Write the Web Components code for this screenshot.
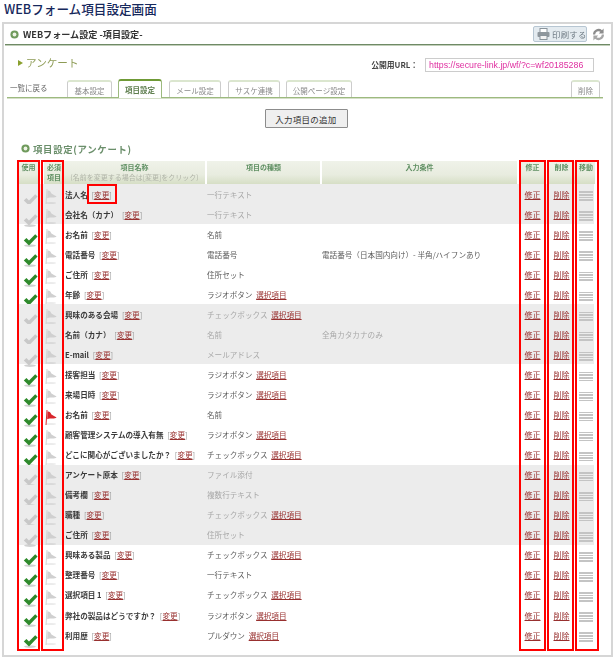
<!DOCTYPE html>
<html lang="ja">
<head>
<meta charset="utf-8">
<title>WEBフォーム項目設定画面</title>
<style>
html, body { margin: 0; padding: 0; background: #fff; }
body { width: 615px; height: 659px; overflow: hidden; font-family: "Noto Sans CJK JP", "Noto Sans", sans-serif; }
</style>
</head>
<body>
<form-page>
  <span slot="title">WEBフォーム項目設定画面</span>
  <panel-head>WEBフォーム設定 -項目設定-</panel-head>
  <form-info url="https://secure-link.jp/wf/?c=wf20185286">アンケート</form-info>
  <tab-bar>
    <tab-item style="width:45px;margin-left:16px">基本設定</tab-item>
    <tab-item active style="width:44px;margin-left:6px">項目設定</tab-item>
    <tab-item style="width:52px;margin-left:7px">メール設定</tab-item>
    <tab-item style="width:52px;margin-left:7px">サスケ連携</tab-item>
    <tab-item style="width:66px;margin-left:6px">公開ページ設定</tab-item>
    <tab-item style="width:29px;margin-left:auto;margin-right:3px">削除</tab-item>
  </tab-bar>
  <add-button>入力項目の追加</add-button>
  <field-table>
    <field-row off>法人名<span slot="kind">一行テキスト</span></field-row>
    <field-row off>会社名（カナ）<span slot="kind">一行テキスト</span></field-row>
    <field-row>お名前<span slot="kind">名前</span></field-row>
    <field-row>電話番号<span slot="kind">電話番号</span><span slot="rule">電話番号（日本国内向け）- 半角/ハイフンあり</span></field-row>
    <field-row>ご住所<span slot="kind">住所セット</span></field-row>
    <field-row choice>年齢<span slot="kind">ラジオボタン</span></field-row>
    <field-row off choice>興味のある会場<span slot="kind">チェックボックス</span></field-row>
    <field-row off>名前（カナ）<span slot="kind">名前</span><span slot="rule">全角カタカナのみ</span></field-row>
    <field-row off>E-mail<span slot="kind">メールアドレス</span></field-row>
    <field-row choice>接客担当<span slot="kind">ラジオボタン</span></field-row>
    <field-row choice>来場日時<span slot="kind">ラジオボタン</span></field-row>
    <field-row required>お名前<span slot="kind">名前</span></field-row>
    <field-row choice>顧客管理システムの導入有無<span slot="kind">ラジオボタン</span></field-row>
    <field-row choice>どこに関心がございましたか？<span slot="kind">チェックボックス</span></field-row>
    <field-row off>アンケート原本<span slot="kind">ファイル添付</span></field-row>
    <field-row off>備考欄<span slot="kind">複数行テキスト</span></field-row>
    <field-row off choice>職種<span slot="kind">チェックボックス</span></field-row>
    <field-row off>ご住所<span slot="kind">住所セット</span></field-row>
    <field-row choice>興味ある製品<span slot="kind">チェックボックス</span></field-row>
    <field-row>整理番号<span slot="kind">一行テキスト</span></field-row>
    <field-row choice>選択項目 1<span slot="kind">チェックボックス</span></field-row>
    <field-row choice>弊社の製品はどうですか？<span slot="kind">ラジオボタン</span></field-row>
    <field-row choice>利用歴<span slot="kind">プルダウン</span></field-row>
  </field-table>
</form-page>

<script>
const define = (name, css, html, extra) => {
  const template = document.createElement('template')
  template.innerHTML = `<style>${css}</style>${html}`
  customElements.define(name, class extends HTMLElement {
    constructor () {
      super()
      this.attachShadow({ mode: 'open' }).appendChild(template.content.cloneNode(true))
    }
    connectedCallback () {
      if (extra) extra(this, this.shadowRoot)
    }
  })
}

const bullet = `<svg width="9" height="9" viewBox="0 0 11 11"><circle cx="5.5" cy="5.5" r="5" fill="#6f9a5c"/><circle cx="5.5" cy="5.5" r="2.3" fill="#eef3e6"/></svg>`

define('form-page', `
  :host { display: block; }
  h1 { margin: 0; height: 22px; padding-left: 4px; font-size: 12.6px; line-height: 17px; font-weight: 500; color: #16285c; }
  .panel { margin-left: 2px; width: 607px; height: 631px; border: 2px solid #d6d6d6; display: flex; flex-direction: column; }
`, `
  <h1><slot name="title"></slot></h1>
  <div class="panel"><slot></slot></div>
`)

define('panel-head', `
  :host { display: flex; align-items: center; height: 20px; margin: 0 1px; padding: 0 3px 0 5px; border-bottom: 1px solid #6f8a66; box-shadow: 0 1px 0 #c2cfba; font-size: 9.1px; font-weight: 700; color: #333; filter: blur(.25px); white-space: nowrap; }
  svg { flex: none; }
  .t { margin-left: 4px; }
  .print { margin-left: auto; width: 54px; height: 16px; box-sizing: border-box; border: 1px solid #b7c6d2; border-radius: 2px; background: #e4ebf0; display: flex; align-items: center; gap: 2px; padding-left: 3px; font-size: 8.4px; font-weight: 400; color: #6f7b84; letter-spacing: .3px; }
  .sync { margin-left: 4px; margin-right: 1px; }
`, `
  ${bullet}
  <span class="t"><slot></slot></span>
  <span class="print">
    <svg width="13" height="12" viewBox="0 0 13 12"><rect x="3" y="0.5" width="7" height="4" fill="#fff" stroke="#8a949b"/><rect x="0.5" y="4" width="12" height="5" rx="1" fill="#8f979d"/><rect x="3" y="7.5" width="7" height="4" fill="#f3f3f3" stroke="#8a949b"/></svg>
    印刷する
  </span>
  <svg class="sync" width="15" height="15" viewBox="0 0 15 15"><path d="M2 7.5A5.5 5.5 0 0 1 11 3.2L12.6 1.4V6.4H7.8L9.4 4.7A3.4 3.4 0 0 0 4.2 7.5Z" fill="#8c8c8c"/><path d="M13 7.5A5.5 5.5 0 0 1 4 11.8L2.4 13.6V8.6H7.2L5.6 10.3A3.4 3.4 0 0 0 10.8 7.5Z" fill="#a6a6a6"/></svg>
`)

define('form-info', `
  :host { display: flex; align-items: center; height: 27px; margin-top: 6px; padding-left: 14px; font-size: 7.8px; filter: blur(.25px); }
  .name { display: flex; align-items: center; gap: 3px; padding-bottom: 4px; font-size: 10.6px; color: #8d9b55; }
  .arrow { width: 0; height: 0; border-left: 5px solid #8aa02f; border-top: 3px solid transparent; border-bottom: 3px solid transparent; }
  .label { margin-left: auto; font-weight: 700; color: #444; }
  .url { margin: 0 17px 0 7px; width: 169px; height: 14px; box-sizing: border-box; border: 1px solid #ccc; padding-left: 3px; line-height: 12px; font-family: "Liberation Sans", sans-serif; font-size: 8.8px; color: #df2fa0; white-space: nowrap; }
`, `
  <span class="name"><i class="arrow"></i><slot></slot></span>
  <span class="label">公開用URL：</span>
  <span class="url"></span>
`, (el, root) => { root.querySelector('.url').textContent = el.getAttribute('url') })

define('tab-bar', `
  :host { display: flex; align-items: flex-end; height: 18px; margin: 1px 8px 0 3px; padding-left: 3px; border-bottom: 1px solid #9dba7f; box-shadow: 0 1px 0 #d5dfc8; font-size: 7.5px; filter: blur(.2px); }
  .back { color: #666; width: 41px; line-height: 16px; height: 17px; flex: none; }
`, `<span class="back">一覧に戻る</span><slot></slot>`)

define('tab-item', `
  :host { display: block; height: 17px; box-sizing: border-box; flex: none; text-align: center; border: 1px solid #ccc; border-bottom: 0; border-top: 2px solid #dbe6cf; border-radius: 3px 3px 0 0; line-height: 17px; font-size: 7.5px; color: #8a8a8a; background: #fff; white-space: nowrap; }
  :host([active]) { height: 19px; margin-bottom: -1px; border-color: #6f9a36 #9dba7f #fff #9dba7f; font-weight: 700; color: #5f7f4f; line-height: 18px; }
`, `<slot></slot>`)

define('add-button', `
  :host { display: flex; justify-content: center; margin-top: 11px; padding-right: 3px; }
  button { width: 83px; height: 19px; padding: 0; border: 1px solid #8c8c8c; border-radius: 1px; background: #efefef; font: 400 8.5px "Noto Sans CJK JP", sans-serif; color: #333; letter-spacing: .25px; }
`, `<button><slot></slot></button>`)

const columns = '23px 23px 143px 115px 197px 29px 29px 18px'

define('field-table', `
  :host { display: block; position: relative; margin: 14px 0 0 14px; width: 576px; }
  .title { display: flex; align-items: center; gap: 3px; height: 13px; padding-left: 3px; font-size: 9.4px; font-weight: 700; color: #6b8f6b; letter-spacing: .7px; filter: blur(.25px); }
  .head { display: grid; grid-template-columns: ${columns}; height: 23px; margin-top: 6px; filter: blur(.25px); }
  .head div { margin-right: 2px; padding-top: 1px; background: linear-gradient(#eff2e9, #e8ecdf 60%, #d6dec5); font-size: 7px; line-height: 10px; font-weight: 700; color: #5f8f62; text-align: center; }
  .head small { display: block; font-size: 7px; font-weight: 400; color: #b0b4a8; }
  .head .gap { margin-left: 3px; margin-right: 0; }
  .head .last { margin-right: 0; }
  .mark { position: absolute; box-sizing: border-box; border: 2px solid #f00; pointer-events: none; }
`, `
  <div class="title">${bullet}項目設定(アンケート)</div>
  <div class="head">
    <div>使用</div>
    <div class="gap">必須<br>項目</div>
    <div>項目名称<small>(名前を変更する場合は[変更]をクリック)</small></div>
    <div>項目の種類</div>
    <div>入力条件</div>
    <div>修正</div>
    <div>削除</div>
    <div class="last">移動</div>
  </div>
  <slot></slot>
  <div class="mark" style="left:-1px;top:18px;width:23px;height:491px"></div>
  <div class="mark" style="left:23px;top:18px;width:23px;height:491px"></div>
  <div class="mark" style="left:69px;top:42px;width:30px;height:20px"></div>
  <div class="mark" style="left:501px;top:18px;width:27px;height:491px"></div>
  <div class="mark" style="left:529px;top:18px;width:27px;height:491px"></div>
  <div class="mark" style="left:557px;top:18px;width:24px;height:491px"></div>
`)

define('field-row', `
  :host { display: grid; grid-template-columns: ${columns}; height: 20.05px; align-items: center; font-size: 7.6px; color: #5c5c5c; filter: blur(.25px); }
  :host([off]) { background: #ececec; color: #a8a8a8; }
  .use, .req { position: relative; height: 100%; }
  .use svg { position: absolute; left: 5px; top: 9.5px; }
  .req svg { position: absolute; left: 3px; top: 4px; }
  .name { padding-left: 1px; font-weight: 700; color: #3a3a3a; white-space: nowrap; }
  .change { font-weight: 400; color: #999; margin-left: 2px; }
  a { color: #98302f; text-decoration: underline; font-weight: 400; }
  .kind, .rule { white-space: nowrap; }
  .pick { margin-left: 2px; }
  .pick:empty { display: none; }
  .act { text-align: center; padding-right: 2px; font-size: 8px; }
  .move { display: flex; flex-direction: column; gap: 1px; padding-top: 4px; margin-left: 2px; width: 14px; }
  .move i { display: block; height: 1.6px; background: #c4c4c4; }
`, `
  <div class="use"><svg width="15" height="13" viewBox="0 0 15 13"><ellipse cx="7" cy="11.6" rx="6" ry="1.3" fill="#000" opacity=".18"/><path class="tick" d="M0.8 6.4L3.4 3.9L6 6.6L12.2 0.3L14.6 2.5L6 11.5Z"/></svg></div>
  <div class="req"><svg width="14" height="17" viewBox="0 0 14 17"><path d="M3 1L2 16" stroke="#d4d4d4" stroke-width="1"/><path class="flag" d="M3.4 2.5C5 2 6.6 3 7.4 5.5L12.6 8.6C10.8 10.2 7 9 3.2 10.2Z"/><ellipse cx="7" cy="15" rx="5" ry="1" fill="#000" opacity=".08"/></svg></div>
  <div class="name"><slot></slot> <span class="change">[<a href="#">変更</a>]</span></div>
  <div class="kind"><slot name="kind"></slot> <a class="pick" href="#"></a></div>
  <div class="rule"><slot name="rule"></slot></div>
  <div class="act"><a href="#">修正</a></div>
  <div class="act"><a href="#">削除</a></div>
  <div class="move"><i></i><i></i><i></i><i></i></div>
`, (el, root) => {
  const off = el.hasAttribute('off')
  root.querySelector('.tick').setAttribute('fill', off ? '#c8c8c8' : '#2f8a2c')
  root.querySelector('.flag').setAttribute('fill', el.hasAttribute('required') ? '#d8262c' : '#d0d0d0')
  if (el.hasAttribute('required')) root.querySelector('.req path').setAttribute('stroke', '#d8262c')
  if (el.hasAttribute('choice')) root.querySelector('.pick').textContent = '選択項目'
})
</script>
</body>
</html>
